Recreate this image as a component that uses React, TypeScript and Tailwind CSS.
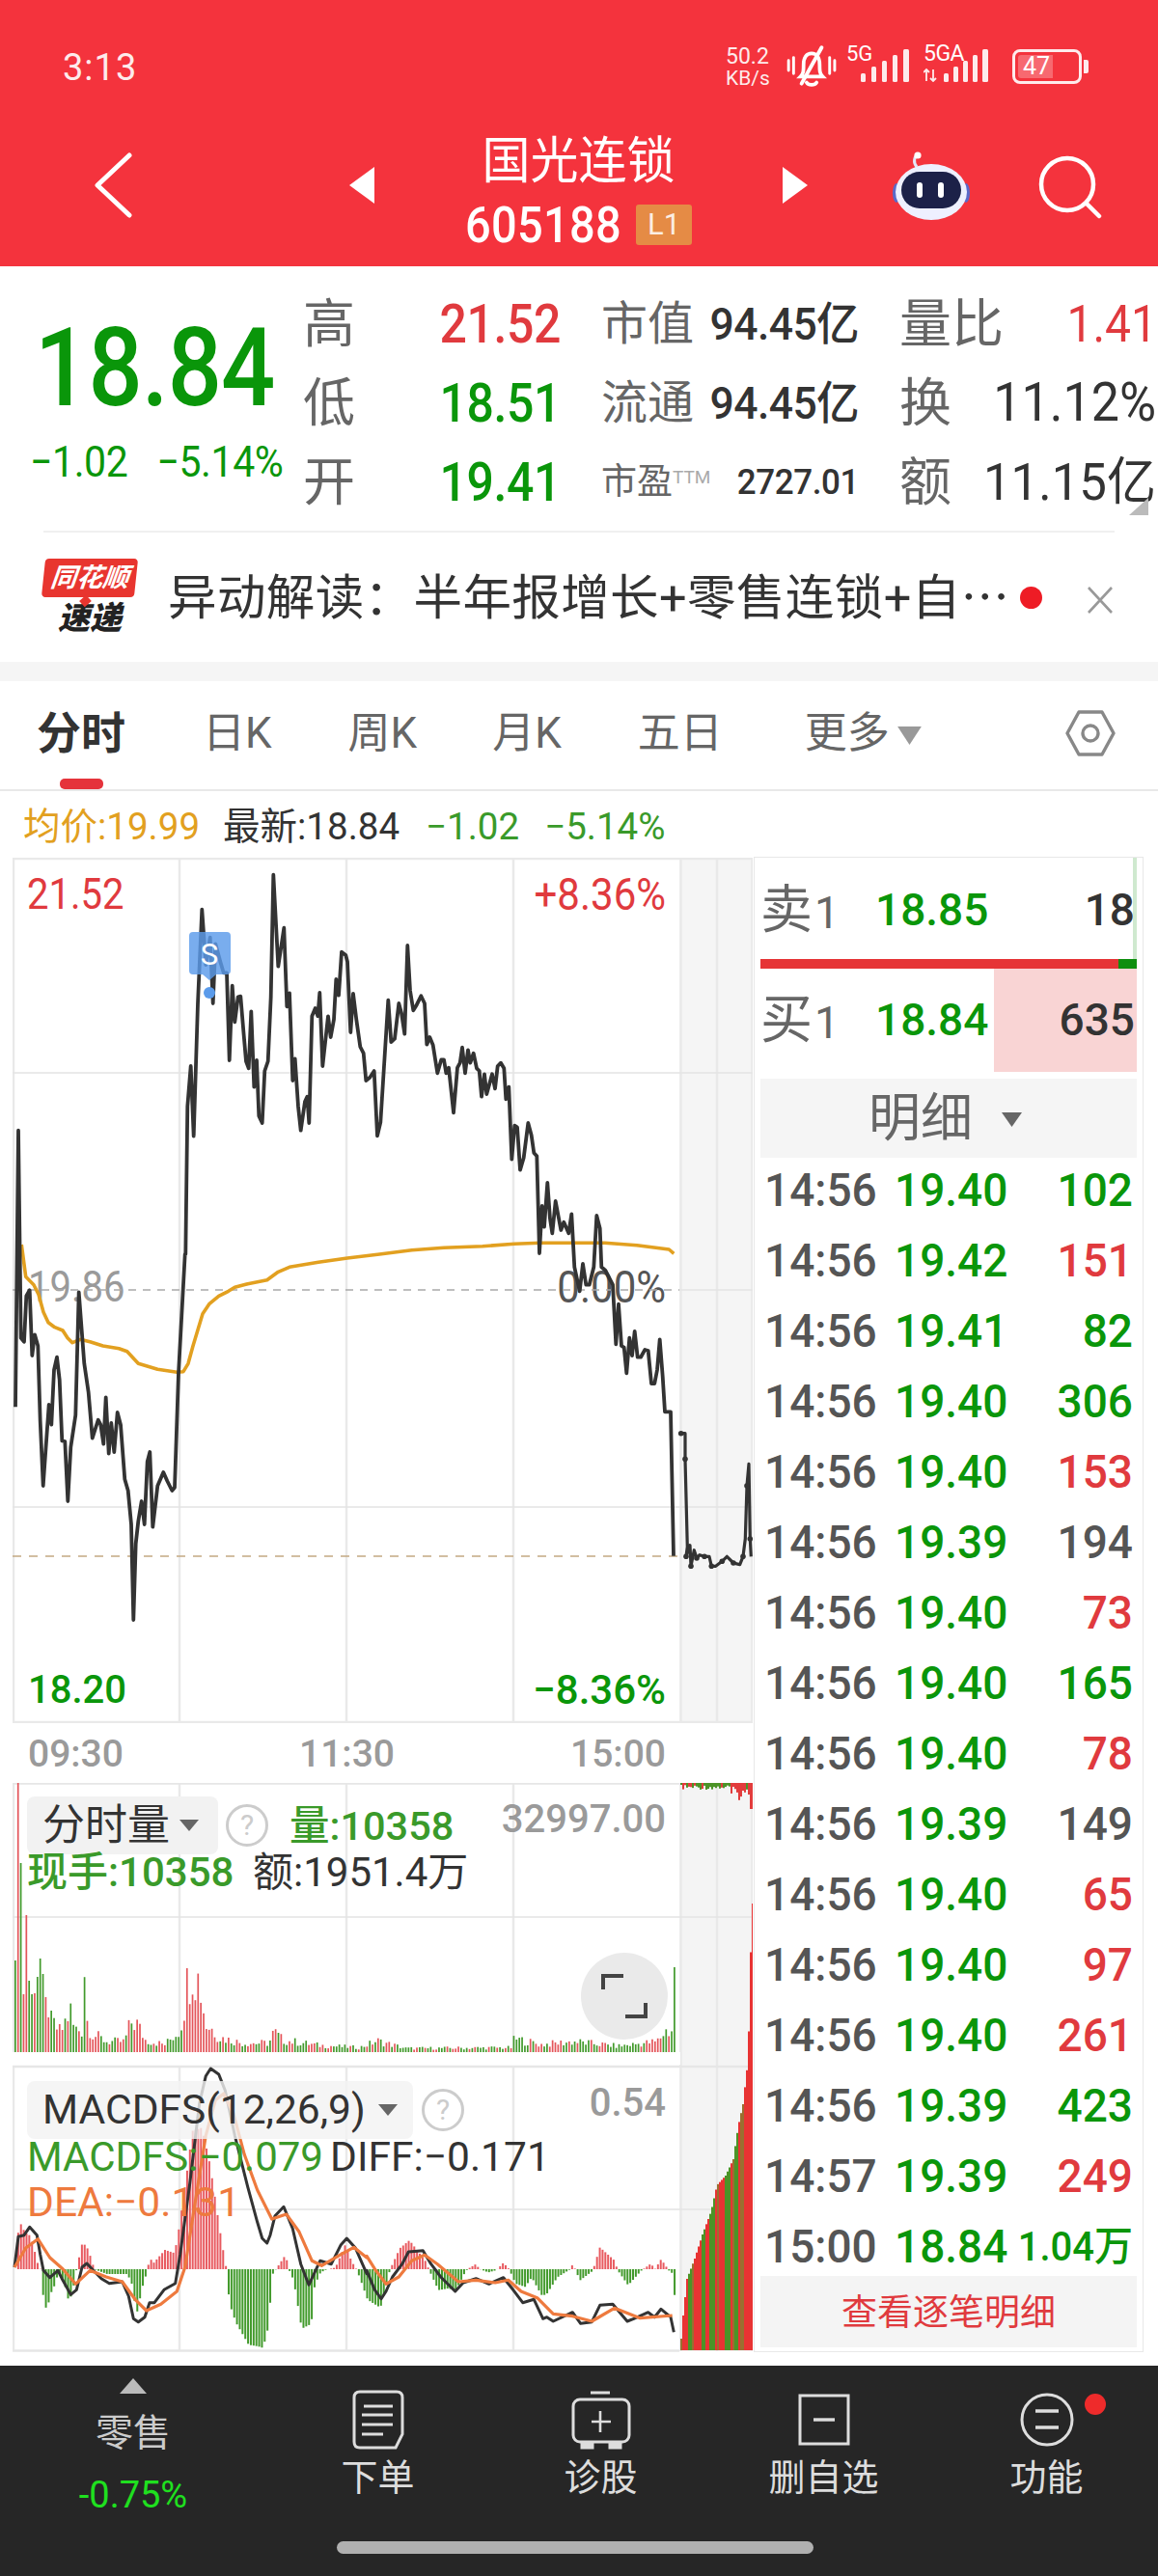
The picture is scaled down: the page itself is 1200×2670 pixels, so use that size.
type Trade = { time: string; price: string; vol: string; tone: "g" | "r" | "n" };

const trades: Trade[] = [
  { time: "14:56", price: "19.40", vol: "102", tone: "g" },
  { time: "14:56", price: "19.42", vol: "151", tone: "r" },
  { time: "14:56", price: "19.41", vol: "82", tone: "g" },
  { time: "14:56", price: "19.40", vol: "306", tone: "g" },
  { time: "14:56", price: "19.40", vol: "153", tone: "r" },
  { time: "14:56", price: "19.39", vol: "194", tone: "n" },
  { time: "14:56", price: "19.40", vol: "73", tone: "r" },
  { time: "14:56", price: "19.40", vol: "165", tone: "g" },
  { time: "14:56", price: "19.40", vol: "78", tone: "r" },
  { time: "14:56", price: "19.39", vol: "149", tone: "n" },
  { time: "14:56", price: "19.40", vol: "65", tone: "r" },
  { time: "14:56", price: "19.40", vol: "97", tone: "r" },
  { time: "14:56", price: "19.40", vol: "261", tone: "r" },
  { time: "14:56", price: "19.39", vol: "423", tone: "g" },
  { time: "14:57", price: "19.39", vol: "249", tone: "r" },
];

// helpers: traced points are in zoomed-crop pixels, s=3
const conv = (ox: number, oy: number, a: number[]) => {
  const out: string[] = [];
  for (let i = 0; i < a.length; i += 2) out.push(`${(ox + a[i] / 3).toFixed(1)},${(oy + a[i + 1] / 3).toFixed(1)}`);
  return out;
};

const rnd = (i: number) => {
  const v = Math.sin(i * 12.9898) * 43758.5453;
  return v - Math.floor(v);
};

const lerp = (anchors: number[], x: number) => {
  for (let i = 0; i < anchors.length - 2; i += 2) {
    if (x >= anchors[i] && x <= anchors[i + 2]) {
      const t = (x - anchors[i]) / (anchors[i + 2] - anchors[i] || 1);
      return anchors[i + 1] + (anchors[i + 3] - anchors[i + 1]) * t;
    }
  }
  return 0;
};

const pricePoints = [
  ...conv(10, 1280, [18, 535]),
  ...conv(10, 900, [27, 815]),
  ...conv(10, 1280, [35, 320, 45, 332, 52, 190, 62, 172, 70, 375, 78, 310, 88, 345, 95, 580, 104, 780, 122, 528, 130, 590, 138, 420, 147, 380, 155, 450, 163, 640, 172, 642, 181, 828, 190, 660, 205, 560, 215, 178, 232, 400, 245, 490, 257, 632, 275, 575, 283, 590, 292, 650, 299, 505, 308, 680, 316, 585, 325, 675, 335, 552, 345, 590, 358, 760, 368, 795, 378, 900, 385, 1197, 392, 960, 400, 890, 410, 828, 419, 900, 428, 705, 436, 675, 445, 908, 460, 780, 478, 738, 490, 765, 505, 795, 513, 785, 525, 430, 545, 60]),
  ...conv(10, 900, [547, 1200, 553, 740, 563, 615, 572, 833, 585, 420, 598, 128, 610, 300, 623, 215, 632, 420, 640, 235, 655, 290, 665, 325, 675, 325, 683, 597, 692, 365, 700, 478, 710, 400, 718, 398, 728, 520, 735, 600, 743, 622, 751, 445, 760, 680, 768, 597, 775, 770, 785, 792, 793, 630, 803, 600, 812, 400, 820, 20, 835, 305, 853, 185, 862, 430, 870, 388, 880, 660, 887, 592, 897, 740, 905, 815, 918, 725, 925, 710, 931, 792, 940, 460, 950, 435, 958, 460, 964, 387, 973, 615, 990, 460, 998, 525, 1008, 470, 1015, 345, 1023, 395, 1032, 260, 1045, 270]),
  ...conv(360, 900, [0, 290, 10, 510, 18, 390, 28, 470, 40, 555, 50, 575, 58, 660, 70, 650, 83, 630, 93, 832, 103, 790, 115, 600, 127, 410, 136, 540, 147, 530, 160, 420, 168, 450, 178, 515, 187, 240, 195, 380, 205, 442, 215, 425, 229, 397, 240, 420, 247, 548, 256, 525, 266, 550, 280, 637, 292, 595, 300, 595, 307, 637, 315, 620, 330, 760, 342, 620, 350, 605, 357, 557, 366, 637, 375, 565, 382, 605, 392, 575, 402, 622, 410, 630, 417, 710, 426, 640, 433, 702, 450, 640, 459, 685, 467, 615, 477, 605, 487, 622, 493, 718, 502, 680, 511, 905, 520, 800, 528, 805, 537, 938, 548, 900, 562, 792, 572, 830, 580, 885, 589, 895]),
  ...conv(540, 1200, [57, 297, 65, 150, 72, 215, 82, 78, 90, 190, 97, 235, 107, 135, 124, 225, 133, 200, 148, 235, 157, 175, 166, 340, 182, 415, 192, 330, 202, 395, 212, 395, 226, 340, 235, 180, 245, 220, 250, 340, 262, 350, 285, 395, 295, 580, 303, 455, 312, 585, 320, 590, 328, 670, 337, 560, 345, 615, 353, 540, 362, 620, 372, 620, 385, 597, 395, 600, 405, 702, 415, 702, 423, 660, 431, 565, 440, 680, 447, 790, 465, 790, 474, 1238]),
].join(" ");

const afterHours = conv(540, 1200, [497, 857, 510, 857, 510, 937, 517, 1210, 513, 1240, 525, 1205, 528, 1270, 538, 1220, 546, 1245, 555, 1235, 570, 1240, 585, 1240, 592, 1270, 605, 1270, 625, 1255, 640, 1240, 660, 1260, 680, 1265, 690, 1240, 697, 1185, 702, 1020, 708, 952, 712, 1185, 715, 1240]);

const avgPoints = [
  ...conv(10, 1280, [37, 30, 50, 130, 75, 155, 90, 185, 105, 240, 120, 272, 140, 287, 165, 297, 180, 320, 195, 335, 220, 325, 250, 332, 290, 345, 340, 353, 365, 362, 400, 400, 460, 418, 520, 427, 540, 425, 555, 400, 570, 345, 600, 245, 620, 215, 650, 190, 680, 175, 700, 163, 740, 152, 800, 140, 835, 115, 870, 100, 960, 85, 1050, 72]),
  ...conv(360, 900, [100, 1200, 200, 1187, 300, 1180, 420, 1175, 520, 1168, 600, 1165, 800, 1165, 900, 1172, 1000, 1185, 1015, 1198]),
].join(" ");

const volAnchors = [15, 95, 62, 26, 72, 56, 76, 30, 84, 30, 85, 117, 87, 117, 89, 44, 95, 24, 110, 14, 128, 14, 135, 40, 141, 38, 150, 16, 170, 10, 186, 30, 194, 98, 198, 120, 204, 99, 208, 81, 212, 37, 220, 30, 226, 20, 250, 12, 278, 12, 283, 27, 292, 16, 330, 9, 372, 6, 390, 15, 420, 5, 530, 6, 532, 18, 560, 10, 594, 14, 640, 8, 680, 14, 688, 27, 692, 30, 695, 6, 696, 88, 699, 88];
const volHead = [95, 280, 196, 60, 142, 74, 60, 61, 78, 97, 81, 57, 36, 43];
const volHeadRed = [false, true, false, true, true, false, false, true, false, false, false, true, true, false];

const volBars = Array.from({ length: 240 }, (_, i) => {
  const x = 15 + i * 2.87;
  const env = lerp(volAnchors, x);
  const h = i < volHead.length ? volHead[i] : x > 695 ? env : env * (0.45 + rnd(i) * 0.65);
  const forcedRed = x > 190 && x < 212;
  return { x, h, red: i < volHead.length ? volHeadRed[i] : forcedRed || rnd(i + 400) > 0.6 };
});

const macdAnchors = [
  ...[15, 665, 27, 507, 35, 535, 50, 555, 60, 560, 70, 590, 85, 650, 93, 665, 100, 740, 112, 795, 125, 740, 135, 720, 150, 672, 165, 700, 182, 770, 195, 720, 205, 665, 222, 587, 235, 590, 250, 630, 260, 665, 300, 680, 340, 680, 360, 680, 375, 700, 392, 805, 410, 720, 425, 670, 432, 630, 445, 645, 480, 605, 510, 615, 525, 530, 550, 350, 565, 235, 595, 225, 620, 340, 650, 540, 668, 650, 672, 665, 680, 770, 700, 830, 740, 900, 770, 905, 785, 910, 800, 850, 815, 680, 825, 665, 855, 620, 865, 665, 880, 700, 905, 850, 935, 835, 945, 720, 960, 680, 975, 668, 1010, 660, 1040, 590, 1060, 640, 1075, 665, 1085, 690, 1110, 760].map((v, i) => (i % 2 === 0 ? 10 + v / 3 : (665 - v) / 3)),
  ...[0, 760, 40, 785, 60, 700, 70, 665, 100, 600, 130, 575, 180, 640, 190, 665, 220, 730, 250, 725, 275, 730, 300, 680, 310, 665, 335, 650, 350, 665, 375, 675, 400, 668, 422, 645, 440, 665, 460, 710, 490, 720, 510, 690, 540, 745, 555, 745, 590, 690, 630, 665, 638, 648, 645, 665, 660, 700, 700, 670, 722, 597, 770, 640, 775, 665, 810, 715, 850, 670, 880, 648, 895, 665, 910, 635, 925, 650, 932, 665, 950, 680, 955, 758].map((v, i) => (i % 2 === 0 ? 380 + v / 3 : (665 - v) / 3)),
];

const macdBars = Array.from({ length: 240 }, (_, i) => {
  const x = 15 + i * 2.87;
  return { x, h: x > 699 ? 0 : lerp(macdAnchors, x) };
});

const diffPoints = [
  ...conv(10, 2130, [15, 660, 27, 565, 45, 560, 62, 535, 85, 560, 95, 620, 105, 670, 125, 692, 150, 670, 165, 700, 190, 745, 208, 730, 225, 660, 240, 648, 260, 670, 285, 695, 310, 710, 350, 705, 370, 750, 385, 820, 400, 830, 420, 815, 435, 770, 450, 770, 480, 730, 515, 710, 530, 620, 560, 400, 590, 150, 610, 65, 625, 42, 650, 60, 670, 110, 700, 250, 740, 410, 770, 520, 785, 570, 800, 585, 810, 560, 825, 500, 852, 472, 880, 540, 905, 650, 930, 715, 965, 640, 1000, 650, 1030, 590, 1048, 570, 1075, 600, 1110, 680]),
  ...conv(380, 2130, [0, 670, 25, 730, 45, 758, 60, 735, 80, 690, 110, 650, 130, 612, 175, 608, 200, 650, 230, 690, 275, 735, 300, 708, 340, 695, 380, 712, 425, 692, 455, 730, 485, 770, 520, 760, 548, 820, 560, 815, 580, 828, 640, 800, 665, 835, 700, 830, 725, 778, 765, 775, 810, 828, 830, 820, 875, 800, 895, 815, 915, 790, 945, 815, 955, 862]),
].join(" ");

const deaPoints = [
  ...conv(10, 2130, [15, 660, 50, 600, 88, 572, 125, 630, 165, 665, 205, 712, 250, 670, 300, 690, 350, 705, 390, 760, 425, 795, 470, 775, 520, 735, 545, 660, 570, 500, 610, 250, 640, 140, 665, 120, 695, 180, 730, 310, 770, 420, 815, 510, 860, 495, 900, 550, 940, 640, 970, 655, 1030, 620, 1070, 598, 1110, 630]),
  ...conv(380, 2130, [0, 625, 25, 665, 60, 712, 100, 690, 140, 640, 180, 622, 220, 650, 285, 705, 340, 700, 400, 708, 440, 700, 480, 735, 530, 755, 580, 805, 640, 812, 700, 828, 770, 787, 850, 818, 950, 810]),
].join(" ");

const cumAnchors = [705, 2436, 708, 2400, 712, 2362, 720, 2341, 728, 2316, 737, 2292, 743, 2265, 752, 2255, 760, 2238, 765, 2204, 770, 2181, 775, 2137, 777, 2074, 779, 1973, 780, 1973];
const cumBars = Array.from({ length: 38 }, (_, i) => {
  const x = 705 + i * 2;
  const band = (x > 712 && x < 717) || (x > 725 && x < 730) || (x > 733 && x < 741) || (x > 749 && x < 756) || (x > 760 && x < 765);
  return { x, top: lerp(cumAnchors, x + 1), fill: band ? "#4c9327" : rnd(i + 90) > 0.75 ? "#9a6f30" : "#e83333" };
});
const topBars = Array.from({ length: 38 }, (_, i) => {
  const x = 705 + i * 2;
  const late = x > 755;
  return { x, h: x > 776 ? 27 : late ? 4 + rnd(i) * 14 : 2 + rnd(i) * 5, red: late ? rnd(i + 9) > 0.25 : rnd(i + 9) > 0.75 };
});

function SignalBars() {
  return (
    <svg width="52" height="34" viewBox="0 0 52 34" fill="#fff" opacity={0.9}>
      <rect x="0" y="25" width="5" height="9" rx="1.5" />
      <rect x="11" y="18" width="5" height="16" rx="1.5" />
      <rect x="22" y="12" width="5" height="22" rx="1.5" />
      <rect x="33" y="6" width="5" height="28" rx="1.5" />
      <rect x="44" y="0" width="6" height="34" rx="1.5" />
    </svg>
  );
}

function StatusBar() {
  return (
    <div className="h-[130px] flex items-start text-white pt-[48px]">
      <span className="ml-[65px] w-[687px] text-[38px] leading-[44px] tracking-[1px] opacity-90">3:13</span>
      <div className="w-[50px] text-[23px] leading-[23px] opacity-90 -mt-[1px]">
        <div>50.2</div>
        <div className="text-[21px]">KB/s</div>
      </div>
      <svg className="ml-[11px] -mt-[3px]" width="54" height="50" viewBox="0 0 52 48" fill="none" stroke="#fff" strokeWidth="3.6" strokeLinecap="round">
        <path d="M16 33c3-3 3-6 3-12 0-7 3-11 8-11s8 4 8 11c0 6 0 9 3 12z" />
        <path d="M22 39c2 3 8 3 10 0" />
        <path d="M37 4 17 40" strokeWidth="3.8" />
        <path d="M4 17v10M9 14v16M45 14v16M50 17v10" strokeWidth="2.8" />
      </svg>
      <div className="ml-[10px] w-[65px] relative">
        <span className="text-[22px] leading-[20px] block -mt-[2px]">5G</span>
        <div className="absolute left-[15px] top-[3px]"><SignalBars /></div>
      </div>
      <div className="ml-[15px] w-[77px] relative">
        <span className="text-[23px] leading-[20px] block -mt-[2px] whitespace-nowrap tracking-[-0.5px]">5GA</span>
        <div className="absolute left-[0px] top-[3px] w-[76px]"><svg width="76" height="34" viewBox="0 0 76 34" fill="#fff" opacity={0.9}><path d="M3 21v12M0 24l3-3 3 3M10 33V21M7 30l3 3 3-3" stroke="#fff" strokeWidth="1.8" fill="none" /><rect x="21" y="25" width="5" height="9" rx="1.5" /><rect x="31" y="18" width="5" height="16" rx="1.5" /><rect x="41" y="12" width="5" height="22" rx="1.5" /><rect x="51" y="6" width="5" height="28" rx="1.5" /><rect x="61" y="0" width="6" height="34" rx="1.5" /></svg></div>
      </div>
      <div className="ml-[15px] mt-[3px] flex items-center">
        <div className="w-[72px] h-[36px] rounded-[8px] border-[3px] border-white/90 p-[3px]">
          <div className="w-[36px] h-full rounded-l-[3px] bg-[#ffffff44] text-[25px] leading-[24px] pl-[5px] whitespace-nowrap">47</div>
        </div>
        <div className="w-[5px] h-[14px] bg-white/90 rounded-r-[2px] ml-[2px]" />
      </div>
    </div>
  );
}

function NavBar() {
  return (
    <div className="h-[146px] flex items-center text-white">
      <svg className="ml-[97px] -mt-[22px]" width="40" height="68" viewBox="0 0 40 68" fill="none" stroke="#fff" strokeWidth="5" strokeLinecap="round" strokeLinejoin="round">
        <path d="M37 3 4 34l33 31" />
      </svg>
      <svg className="ml-[225px] -mt-[22px]" width="26" height="38" viewBox="0 0 26 38" fill="#fff"><path d="M26 0v38L0 19z" /></svg>
      <div className="w-[423px] flex flex-col items-center -mt-[4px]">
        <div className="text-[50px] leading-[62px] -mt-[3px] scale-y-105">国光连锁</div>
        <div className="flex items-center h-[60px] mt-[5px]">
          <span className="text-[47px] font-medium leading-[56px] tracking-[0.3px] scale-y-110">605188</span>
          <span className="ml-[15px] w-[58px] h-[42px] rounded-[3px] bg-[#e58b45] text-[31px] leading-[42px] text-center text-white/85">L1</span>
        </div>
      </div>
      <svg className="-mt-[22px]" width="26" height="38" viewBox="0 0 26 38" fill="#fff"><path d="M0 0v38L26 19z" /></svg>
      <svg className="ml-[88px] -mt-[20px]" width="80" height="72" viewBox="0 0 80 72">
        <path d="M25 16c-4-5-3-11 2-13" fill="none" stroke="#e3e6f8" strokeWidth="3" />
        <circle cx="26" cy="4" r="3.6" fill="#fff" />
        <ellipse cx="4" cy="43" rx="4" ry="10" fill="#5a69c9" />
        <ellipse cx="76" cy="43" rx="4" ry="10" fill="#5a69c9" />
        <ellipse cx="40" cy="42" rx="37" ry="29" fill="#eef0ff" />
        <rect x="9" y="21" width="62" height="38" rx="19" fill="#1c2148" />
        <rect x="25" y="32" width="6" height="16" rx="3" fill="#fff" />
        <rect x="47" y="32" width="6" height="16" rx="3" fill="#fff" />
      </svg>
      <svg className="ml-[71px] -mt-[18px]" width="66" height="66" viewBox="0 0 66 66" fill="none" stroke="#fff" strokeWidth="4.5" strokeLinecap="round">
        <circle cx="30" cy="30" r="27" />
        <path d="m50 50 13 13" />
      </svg>
    </div>
  );
}

const statGreen = "text-[#0a960a]";
const statRed = "text-[#e03a3e]";

function Stats() {
  return (
    <div className="h-[274px] flex pt-[19px] overflow-hidden relative">
      <div className="w-[314px] shrink-0">
        <div className={`ml-[36px] mt-[40px] text-[99px] leading-[92px] font-medium tracking-[-0.8px] scale-y-[1.14] origin-left ${statGreen}`}>18.84</div>
        <div className={`flex mt-[30px] ml-[31px] text-[41px] leading-[44px] scale-y-110 origin-left ${statGreen}`}>
          <span className="tracking-[-0.4px]">−1.02</span>
          <span className="ml-[30px] tracking-[-0.4px]">−5.14%</span>
        </div>
      </div>
      <div className="grid grid-cols-[267px_267px_266px] gap-x-[42px] auto-rows-[82px]">
        <StatLabel label="高" value="21.52" cls={statRed} />
        <div className="flex items-center justify-between text-[#666] text-[48px]"><span>市值</span><span className="text-[44.5px] text-[#333] font-medium tracking-[-0.6px] scale-y-105">94.45亿</span></div>
        <div className="flex items-center justify-between text-[#666] text-[54px]"><span>量比</span><span className={`text-[48px] -mr-[1px] scale-y-110 ${statRed}`}>1.41</span></div>
        <StatLabel label="低" value="18.51" cls={statGreen} />
        <div className="flex items-center justify-between text-[#666] text-[48px]"><span>流通</span><span className="text-[44.5px] text-[#333] font-medium tracking-[-0.6px] scale-y-105">94.45亿</span></div>
        <div className="flex items-center justify-between text-[#666] text-[54px]"><span>换</span><span className="text-[52px] text-[#333] scale-y-105">11.12%</span></div>
        <StatLabel label="开" value="19.41" cls={statGreen} />
        <div className="flex items-center text-[#666] text-[37px]"><span>市盈</span><span className="text-[19px] text-[#aaa] -mt-[10px]">TTM</span><span className="ml-auto text-[35px] text-[#333] font-medium tracking-[-0.4px] scale-y-105">2727.01</span></div>
        <div className="flex items-center justify-between text-[#666] text-[54px]"><span>额</span><span className="text-[51px] text-[#333] whitespace-nowrap scale-y-105">11.15亿</span></div>
      </div>
      <svg className="absolute right-[10px] bottom-[16px]" width="20" height="18" viewBox="0 0 20 18" fill="#bbb"><path d="M20 0v18H0z" /></svg>
    </div>
  );
}

function StatLabel({ label, value, cls }: { label: string; value: string; cls: string }) {
  return (
    <div className="flex items-center justify-between text-[#666] text-[54px]">
      <span>{label}</span>
      <span className={`text-[50px] font-medium tracking-[-0.4px] scale-y-110 ${cls}`}>{value}</span>
    </div>
  );
}

function Banner() {
  return (
    <div className="h-[136px] mx-[45px] border-t-[2px] border-[#f0f0f0] flex items-center relative">
      <div className="w-[96px] flex flex-col items-center">
        <div className="relative w-[96px] h-[40px] bg-[#e8352f] rounded-[4px] text-white text-[27px] leading-[40px] font-bold italic text-center whitespace-nowrap -skew-x-6">
          同花顺
          <div className="absolute left-[40px] top-[38px] w-[12px] h-[12px] bg-[#e8352f] rotate-45 scale-75" />
        </div>
        <div className="mt-[4px] text-[33px] leading-[36px] font-black italic text-[#222] whitespace-nowrap">速递</div>
      </div>
      <div className="ml-[33px] text-[50.5px] leading-[60px] text-[#333] whitespace-nowrap tracking-[0.4px] mt-[2px]">异动解读：半年报增长+零售连锁+自⋯</div>
      <div className="absolute left-[1012px] top-[56px] w-[23px] h-[23px] rounded-full bg-[#ee1c25]" />
      <svg className="absolute left-[1081px] top-[55px]" width="28" height="30" viewBox="0 0 28 30" fill="none" stroke="#999" strokeWidth="2.6"><path d="m2 2 24 26M26 2 2 28" /></svg>
    </div>
  );
}

function Tabs() {
  return (
    <div className="h-[114px] relative border-b-[2px] border-[#e8e8e8] text-[#666] text-[44px]">
      <div className="flex items-center h-[108px]">
        <span className="ml-[38px] font-bold text-[#333] text-[46px]">分时</span>
        <span className="ml-[80px] whitespace-nowrap">日K</span>
        <span className="ml-[79px] whitespace-nowrap">周K</span>
        <span className="ml-[78px] whitespace-nowrap">月K</span>
        <span className="ml-[79px] whitespace-nowrap">五日</span>
        <span className="ml-[85px]">更多</span>
        <svg className="ml-[8px] mt-[4px]" width="25" height="19" viewBox="0 0 26 20" fill="#999"><path d="M0 0h26L13 20z" /></svg>
        <svg className="ml-[149px]" width="52" height="52" viewBox="0 0 52 52" fill="none" stroke="#888" strokeWidth="3.4" strokeLinejoin="round">
          <path d="M14 4h24l12 22-12 22H14L2 26z" />
          <circle cx="26" cy="26" r="8" />
        </svg>
      </div>
      <div className="absolute left-[62px] bottom-0 w-[45px] h-[11px] rounded-[5px] bg-[#e5333b]" />
    </div>
  );
}

function InfoRow() {
  return (
    <div className="h-[68px] flex items-center text-[38.5px] whitespace-nowrap pt-[6px]">
      <span className="ml-[24px] text-[#e2a020]">均价:19.99</span>
      <span className="ml-[24px] text-[#333]">最新:18.84</span>
      <span className="ml-[27px] text-[#3a9a2a]">−1.02</span>
      <span className="ml-[26px] text-[#3a9a2a]">−5.14%</span>
    </div>
  );
}

function PriceChart() {
  return (
    <div className="relative h-[897px] w-[767px] mt-[1px]">
      <span className="absolute left-[15px] top-[14px] text-[40px] leading-[50px] text-[#e03a3e] scale-y-110">21.52</span>
      <span className="absolute right-[90px] top-[14px] text-[42px] leading-[50px] text-[#e03a3e] scale-y-110">+8.36%</span>
      <span className="absolute left-[16px] top-[420px] text-[40px] leading-[52px] text-[#9a9a9a] scale-y-110">19.86</span>
      <span className="absolute right-[90px] top-[420px] text-[42px] leading-[52px] text-[#555] scale-y-110">0.00%</span>
      <span className="absolute left-[16px] top-[838px] text-[40px] leading-[50px] text-[#0a960a] font-medium">18.20</span>
      <span className="absolute right-[90px] top-[838px] text-[42px] leading-[50px] text-[#0a960a] font-medium">−8.36%</span>
      <svg className="absolute inset-0" width="767" height="897" viewBox="13 889 767 897" fill="none">
        <rect x="704" y="889" width="76" height="897" fill="#f4f4f4" fillOpacity="0.9" />
        <path d="M14 889v897M186 889v897M359 889v897M532 889v897M705.5 889v897M743 889v897M779.5 889v897M13 890h767M13 1785h767" stroke="#e9e9e9" strokeWidth="2.5" />
        <path d="M13 1112h767M13 1562h767M704 1337h76" stroke="#e4e4e4" strokeWidth="1.6" />
        <path d="M13 1337h691" stroke="#a9a9a9" strokeWidth="1.6" strokeDasharray="8 7" />
        <path d="M13 1613h691" stroke="#c4a982" strokeWidth="1.6" strokeDasharray="9 8" />
        <polyline points={avgPoints} stroke="#e2a020" strokeWidth="3.6" strokeLinejoin="round" />
        <polyline points={pricePoints} stroke="#333" strokeWidth="3.8" strokeLinejoin="round" />
        <polyline points={afterHours.join(" ")} stroke="#333" strokeWidth="3.2" strokeLinejoin="round" />
        {afterHours.filter((_, i) => i % 2 === 0).map((p) => (
          <circle key={p} cx={p.split(",")[0]} cy={p.split(",")[1]} r="2.8" fill="#333" />
        ))}
        <path d="M200 966h35a4 4 0 0 1 4 4v36a4 4 0 0 1-4 4h-11l-7 6-7-6h-10a4 4 0 0 1-4-4v-36a4 4 0 0 1 4-4z" fill="#5b9bea" fillOpacity="0.82" />
        <circle cx="217" cy="1029" r="6" fill="#5b9bea" />
        <text x="217" y="1000" fill="#fff" fontSize="31" textAnchor="middle">S</text>
      </svg>
    </div>
  );
}

function TimeAxis() {
  return (
    <div className="h-[62px] w-[767px] flex items-center justify-between pl-[16px] pr-[90px] pt-[3px] text-[39px] text-[#9a9a9a] font-medium">
      <span>09:30</span>
      <span>11:30</span>
      <span>15:00</span>
    </div>
  );
}

function LowerCharts() {
  return (
    <div className="relative h-[592px] w-[767px]">
      <svg className="absolute inset-0" width="767" height="592" viewBox="13 1848 767 592" fill="none">
        <rect x="704" y="1848" width="76" height="589" fill="#f4f4f4" />
        <path d="M14 1848v279M186 1848v279M359 1848v279M532 1848v279M14 2142v295M186 2142v295M359 2142v295M532 2142v295M705.5 1848v589M743 1848v589M779.5 1848v589" stroke="#e9e9e9" strokeWidth="2.5" />
        <path d="M13 1848.5h691M13 2142h767M13 2436.5h691" stroke="#e6e6e6" strokeWidth="2.4" />
        <path d="M13 1987h767M13 2290h767" stroke="#e4e4e4" strokeWidth="1.6" />
        <rect x="13" y="2127" width="692" height="13" fill="#fff" />
        {volBars.map((b) => (
          <rect key={b.x} x={b.x} y={2127 - b.h} width="1.7" height={b.h} fill={b.red ? "#e4555a" : "#429a2c"} />
        ))}
        {macdBars.map((b) => (
          <rect key={b.x} x={b.x} y={b.h > 0 ? 2352 - b.h : 2352} width="2" height={Math.abs(b.h)} fill={b.h > 0 ? "#e85a60" : "#429a2c"} />
        ))}
        {topBars.map((b) => (
          <rect key={b.x} x={b.x} y="1848" width="2" height={b.h} fill={b.red ? "#e23c3c" : "#4c9327"} />
        ))}
        {cumBars.map((b) => (
          <rect key={b.x} x={b.x} y={b.top} width="2.2" height={2436 - b.top} fill={b.fill} />
        ))}
        <polyline points={diffPoints} stroke="#333" strokeWidth="3" strokeLinejoin="round" />
        <polyline points={deaPoints} stroke="#ee7a3e" strokeWidth="3.2" strokeLinejoin="round" />
      </svg>

      <div className="absolute left-[15px] top-[14px] w-[198px] h-[60px] rounded-[8px] bg-[#f2f2f2] flex items-center pl-[16px] text-[44px] text-[#333] whitespace-nowrap">
        分时量
        <svg className="ml-[10px]" width="20" height="12" viewBox="0 0 20 12" fill="#666"><path d="M0 0h20L10 12z" /></svg>
      </div>
      <div className="absolute left-[221px] top-[22px] w-[44px] h-[44px] rounded-full border-[3px] border-[#ccc] text-[#ccc] text-[30px] leading-[38px] text-center">?</div>
      <span className="absolute left-[287px] top-[19px] text-[41.5px] leading-[52px] text-[#3a9a2a] font-medium whitespace-nowrap">量:10358</span>
      <span className="absolute right-[90px] top-[12px] text-[40px] leading-[52px] text-[#9a9a9a] font-medium">32997.00</span>
      <span className="absolute left-[15px] top-[67px] text-[42px] leading-[52px] text-[#3a9a2a] font-medium whitespace-nowrap">现手:10358</span>
      <span className="absolute left-[249px] top-[67px] text-[42px] leading-[52px] text-[#333] whitespace-nowrap">额:1951.4万</span>

      <div className="absolute left-[589px] top-[176px] w-[90px] h-[90px] rounded-full bg-[#e8e8e8]/90">
        <svg width="90" height="90" viewBox="0 0 90 90" fill="none" stroke="#444" strokeWidth="4"><path d="M23 38V24h21M67 52v14H46" /></svg>
      </div>

      <div className="absolute left-[15px] top-[309px] w-[400px] h-[60px] rounded-[8px] bg-[#f2f2f2]/80 flex items-center pl-[16px] text-[42.5px] text-[#333] whitespace-nowrap">
        MACDFS(12,26,9)
        <svg className="ml-[13px]" width="20" height="12" viewBox="0 0 20 12" fill="#666"><path d="M0 0h20L10 12z" /></svg>
      </div>
      <div className="absolute left-[424px] top-[317px] w-[44px] h-[44px] rounded-full border-[3px] border-[#ccc] text-[#ccc] text-[30px] leading-[38px] text-center">?</div>
      <span className="absolute right-[90px] top-[306px] text-[40px] leading-[52px] text-[#9a9a9a] font-medium">0.54</span>
      <span className="absolute left-[15px] top-[362px] text-[42px] leading-[52px] text-[#3a9a2a] whitespace-nowrap">MACDFS:−0.079</span>
      <span className="absolute left-[329px] top-[362px] text-[42.5px] leading-[52px] text-[#333] whitespace-nowrap">DIFF:−0.171</span>
      <span className="absolute left-[15px] top-[409px] text-[42.5px] leading-[52px] text-[#ee7a3e] whitespace-nowrap">DEA:−0.131</span>
    </div>
  );
}

function TradeRow({ t }: { t: Trade }) {
  const tone = t.tone === "g" ? "text-[#0a960a]" : t.tone === "r" ? "text-[#e03a3e]" : "text-[#555]";
  return (
    <div className="h-[73px] flex items-center text-[46px] font-medium scale-y-105">
      <span className="ml-[4px] w-[135px] text-[#555]">{t.time}</span>
      <span className="text-[#0a960a]">{t.price}</span>
      <span className={`ml-auto mr-[4px] ${tone}`}>{t.vol}</span>
    </div>
  );
}

function OrderPanel() {
  return (
    <div className="w-[404px] h-[1550px] border border-[#e8e8e8] px-[6px] relative">
      <div className="h-[105px] flex items-center text-[46px] font-medium relative">
        <span className="text-[54px] font-normal text-[#666] w-[120px] whitespace-nowrap pt-[4px]">卖<span className="text-[46px] ml-[2px]">1</span></span>
        <span className="text-[#0a960a] pt-[4px] -ml-[1px]">18.85</span>
        <span className="ml-auto mr-[2px] text-[#333] pt-[4px]">18</span>
        <div className="absolute right-0 top-0 w-[4px] h-full bg-[#cfe9cf]" />
      </div>
      <div className="h-[10px] flex">
        <div className="flex-1 bg-[#e63436]" />
        <div className="w-[19px] bg-[#0f8f0f]" />
      </div>
      <div className="h-[107px] flex items-center text-[46px] font-medium relative">
        <div className="absolute right-0 top-0 w-[148px] h-full bg-[#f9d4d4]" />
        <span className="text-[54px] font-normal text-[#666] w-[120px] whitespace-nowrap relative">买<span className="text-[46px] ml-[2px]">1</span></span>
        <span className="text-[#0a960a] relative -ml-[1px]">18.84</span>
        <span className="ml-auto mr-[2px] text-[#333] relative">635</span>
      </div>
      <div className="mt-[7px] h-[82px] bg-[#f5f5f5] flex items-center text-[54px] text-[#666]">
        <span className="ml-[112px]">明细</span>
        <svg className="ml-[30px] mt-[3px]" width="21" height="15" viewBox="0 0 21 15" fill="#666"><path d="M0 0h21L10.5 15z" /></svg>
      </div>
      <div className="-mt-[3px]">
        {trades.map((t, i) => (
          <TradeRow key={i} t={t} />
        ))}
        <div className="h-[73px] flex items-center text-[46px] font-medium scale-y-105">
          <span className="ml-[4px] w-[135px] text-[#555]">15:00</span>
          <span className="text-[#0a960a]">18.84</span>
          <span className="ml-auto mr-[4px] text-[40px] text-[#0a960a] whitespace-nowrap">1.04万</span>
        </div>
      </div>
      <div className="relative -mt-[6px] h-[74px] bg-[#f4f4f4] flex items-center justify-center text-[37px] text-[#e03a3e] pt-[4px]">查看逐笔明细</div>
    </div>
  );
}

function FooterIcon({ kind }: { kind: "doc" | "bag" | "minus" | "menu" }) {
  if (kind === "doc")
    return (
      <svg width="54" height="62" viewBox="0 0 54 62" fill="none" stroke="#ddd">
        <path d="M8 2h38q6 0 6 6v38l-7 14H8q-6 0-6-6V8q0-6 6-6z" strokeWidth="3" />
        <path d="M12 17h30M10 26h32M10 36h32M10 46h22" strokeWidth="3" />
      </svg>
    );
  if (kind === "bag")
    return (
      <svg width="62" height="62" viewBox="0 0 62 62" fill="none" stroke="#ddd">
        <path d="M20 3h20" strokeWidth="3" />
        <rect x="2" y="10" width="58" height="44" rx="7" strokeWidth="3" />
        <path d="M30 22v22M21 33h20" strokeWidth="2.6" />
        <path d="M11 55v5h11v-5M40 55v5h11v-5" strokeWidth="3" fill="#ddd" />
      </svg>
    );
  if (kind === "minus")
    return (
      <svg width="54" height="54" viewBox="0 0 54 54" fill="none" stroke="#ddd">
        <rect x="2" y="2" width="50" height="50" strokeWidth="3" />
        <path d="M16 27h22" strokeWidth="3.4" />
      </svg>
    );
  return (
    <svg width="56" height="58" viewBox="0 0 56 58" fill="none" stroke="#ddd">
      <circle cx="28" cy="29" r="26" strokeWidth="3" />
      <path d="M16 20h24M16 37h24" strokeWidth="3.4" />
    </svg>
  );
}

function FooterItem({ kind, label, dot }: { kind: "doc" | "bag" | "minus" | "menu"; label: string; dot?: boolean }) {
  return (
    <div className="w-[231px] flex flex-col items-center pt-[25px] relative">
      <div className="h-[62px] flex items-center">
        <FooterIcon kind={kind} />
      </div>
      <div className="mt-[6px] text-[38px] leading-[46px] text-[#ddd] whitespace-nowrap">{label}</div>
      {dot && <div className="absolute left-[155px] top-[29px] w-[22px] h-[22px] rounded-full bg-[#ee2b2b]" />}
    </div>
  );
}

function Footer() {
  return (
    <div className="h-[218px] bg-[#262626] overflow-hidden">
      <div className="flex h-[182px]">
        <div className="w-[276px] flex flex-col items-center pt-[13px]">
          <svg width="28" height="16" viewBox="0 0 28 16" fill="#bbb"><path d="M14 0l14 16H0z" /></svg>
          <div className="mt-[18px] text-[39px] leading-[46px] text-[#ccc]">零售</div>
          <div className="mt-[21px] text-[38px] leading-[40px] text-[#1fe01f]">-0.75%</div>
        </div>
        <FooterItem kind="doc" label="下单" />
        <FooterItem kind="bag" label="诊股" />
        <FooterItem kind="minus" label="删自选" />
        <FooterItem kind="menu" label="功能" dot />
      </div>
      <div className="ml-[349px] w-[494px] h-[13px] rounded-full bg-[#b0b0b0]" />
    </div>
  );
}

export default function App() {
  return (
    <div className="w-[1200px] h-[2670px] bg-white overflow-hidden font-['Roboto','Noto_Sans_CJK_SC',sans-serif]">
      <div className="bg-[#f4333d] h-[276px]">
        <StatusBar />
        <NavBar />
      </div>
      <Stats />
      <Banner />
      <div className="h-[20px] bg-[#f5f5f5]" />
      <Tabs />
      <InfoRow />
      <div className="flex pl-[13px] h-[1564px] items-start">
        <div className="w-[768px]">
          <PriceChart />
          <TimeAxis />
          <LowerCharts />
        </div>
        <OrderPanel />
      </div>
      <Footer />
    </div>
  );
}
